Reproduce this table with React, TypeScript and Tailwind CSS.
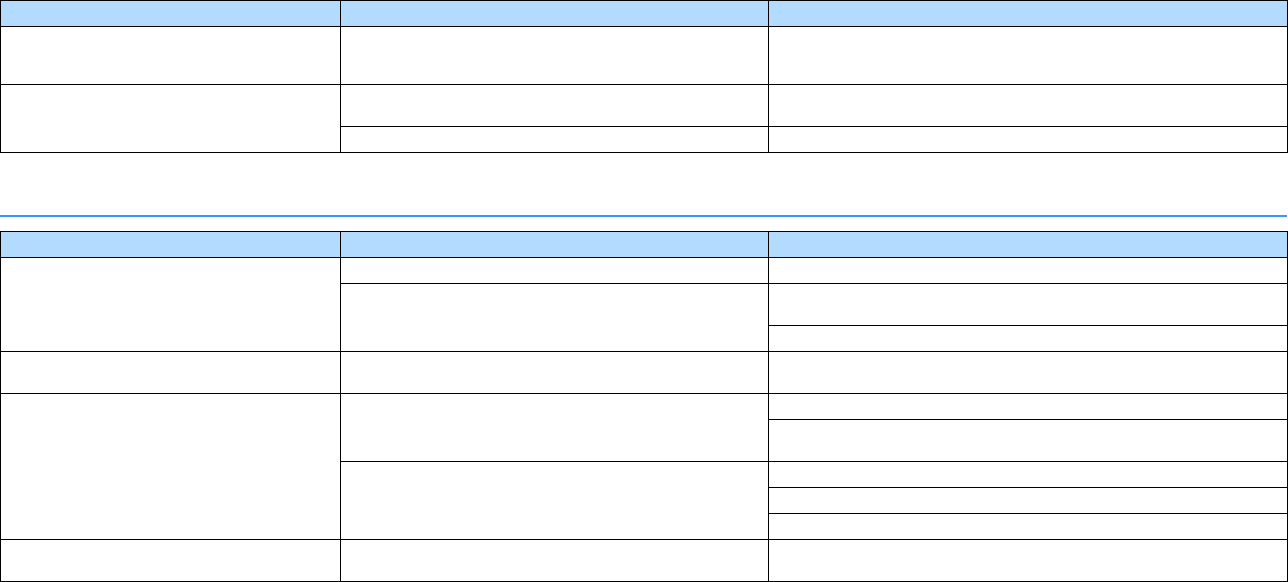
import React from "react";

const head = "bg-[#b3daff]";
const cell = "bg-white";

const App = () => {
  return (
    <div className="w-[1288px] bg-white font-['Liberation_Sans',sans-serif] text-sm text-black">
      {/* first table */}
      <div className="grid grid-cols-[339px_427px_1fr] grid-rows-[25px_57px_41px_25px] gap-px bg-black p-px">
        <div className={head} />
        <div className={head} />
        <div className={head} />

        <div className={cell} />
        <div className={cell} />
        <div className={cell} />

        <div className={`${cell} row-span-2`} />
        <div className={cell} />
        <div className={cell} />
        <div className={`${cell} col-start-2`} />
        <div className={cell} />
      </div>

      <div className="mt-[62px] h-[2px] w-[1287px] bg-[#3399ff]" />

      {/* second table */}
      <div className="mt-[14px] grid grid-cols-[339px_427px_1fr] grid-rows-[25px_25px_41px_25px_41px_25px_41px_25px_25px_25px_41px] gap-px bg-black p-px">
        <div className={`${head} col-start-1 row-start-1`} />
        <div className={`${head} col-start-2 row-start-1`} />
        <div className={`${head} col-start-3 row-start-1`} />

        {/* column 1 */}
        <div className={`${cell} col-start-1 row-start-2 row-span-3`} />
        <div className={`${cell} col-start-1 row-start-5`} />
        <div className={`${cell} col-start-1 row-start-6 row-span-5`} />
        <div className={`${cell} col-start-1 row-start-11`} />

        {/* column 2 */}
        <div className={`${cell} col-start-2 row-start-2`} />
        <div className={`${cell} col-start-2 row-start-3 row-span-2`} />
        <div className={`${cell} col-start-2 row-start-5`} />
        <div className={`${cell} col-start-2 row-start-6 row-span-2`} />
        <div className={`${cell} col-start-2 row-start-8 row-span-3`} />
        <div className={`${cell} col-start-2 row-start-11`} />

        {/* column 3 */}
        <div className={`${cell} col-start-3 row-start-2`} />
        <div className={`${cell} col-start-3 row-start-3`} />
        <div className={`${cell} col-start-3 row-start-4`} />
        <div className={`${cell} col-start-3 row-start-5`} />
        <div className={`${cell} col-start-3 row-start-6`} />
        <div className={`${cell} col-start-3 row-start-7`} />
        <div className={`${cell} col-start-3 row-start-8`} />
        <div className={`${cell} col-start-3 row-start-9`} />
        <div className={`${cell} col-start-3 row-start-10`} />
        <div className={`${cell} col-start-3 row-start-11`} />
      </div>
    </div>
  );
};

export default App;
